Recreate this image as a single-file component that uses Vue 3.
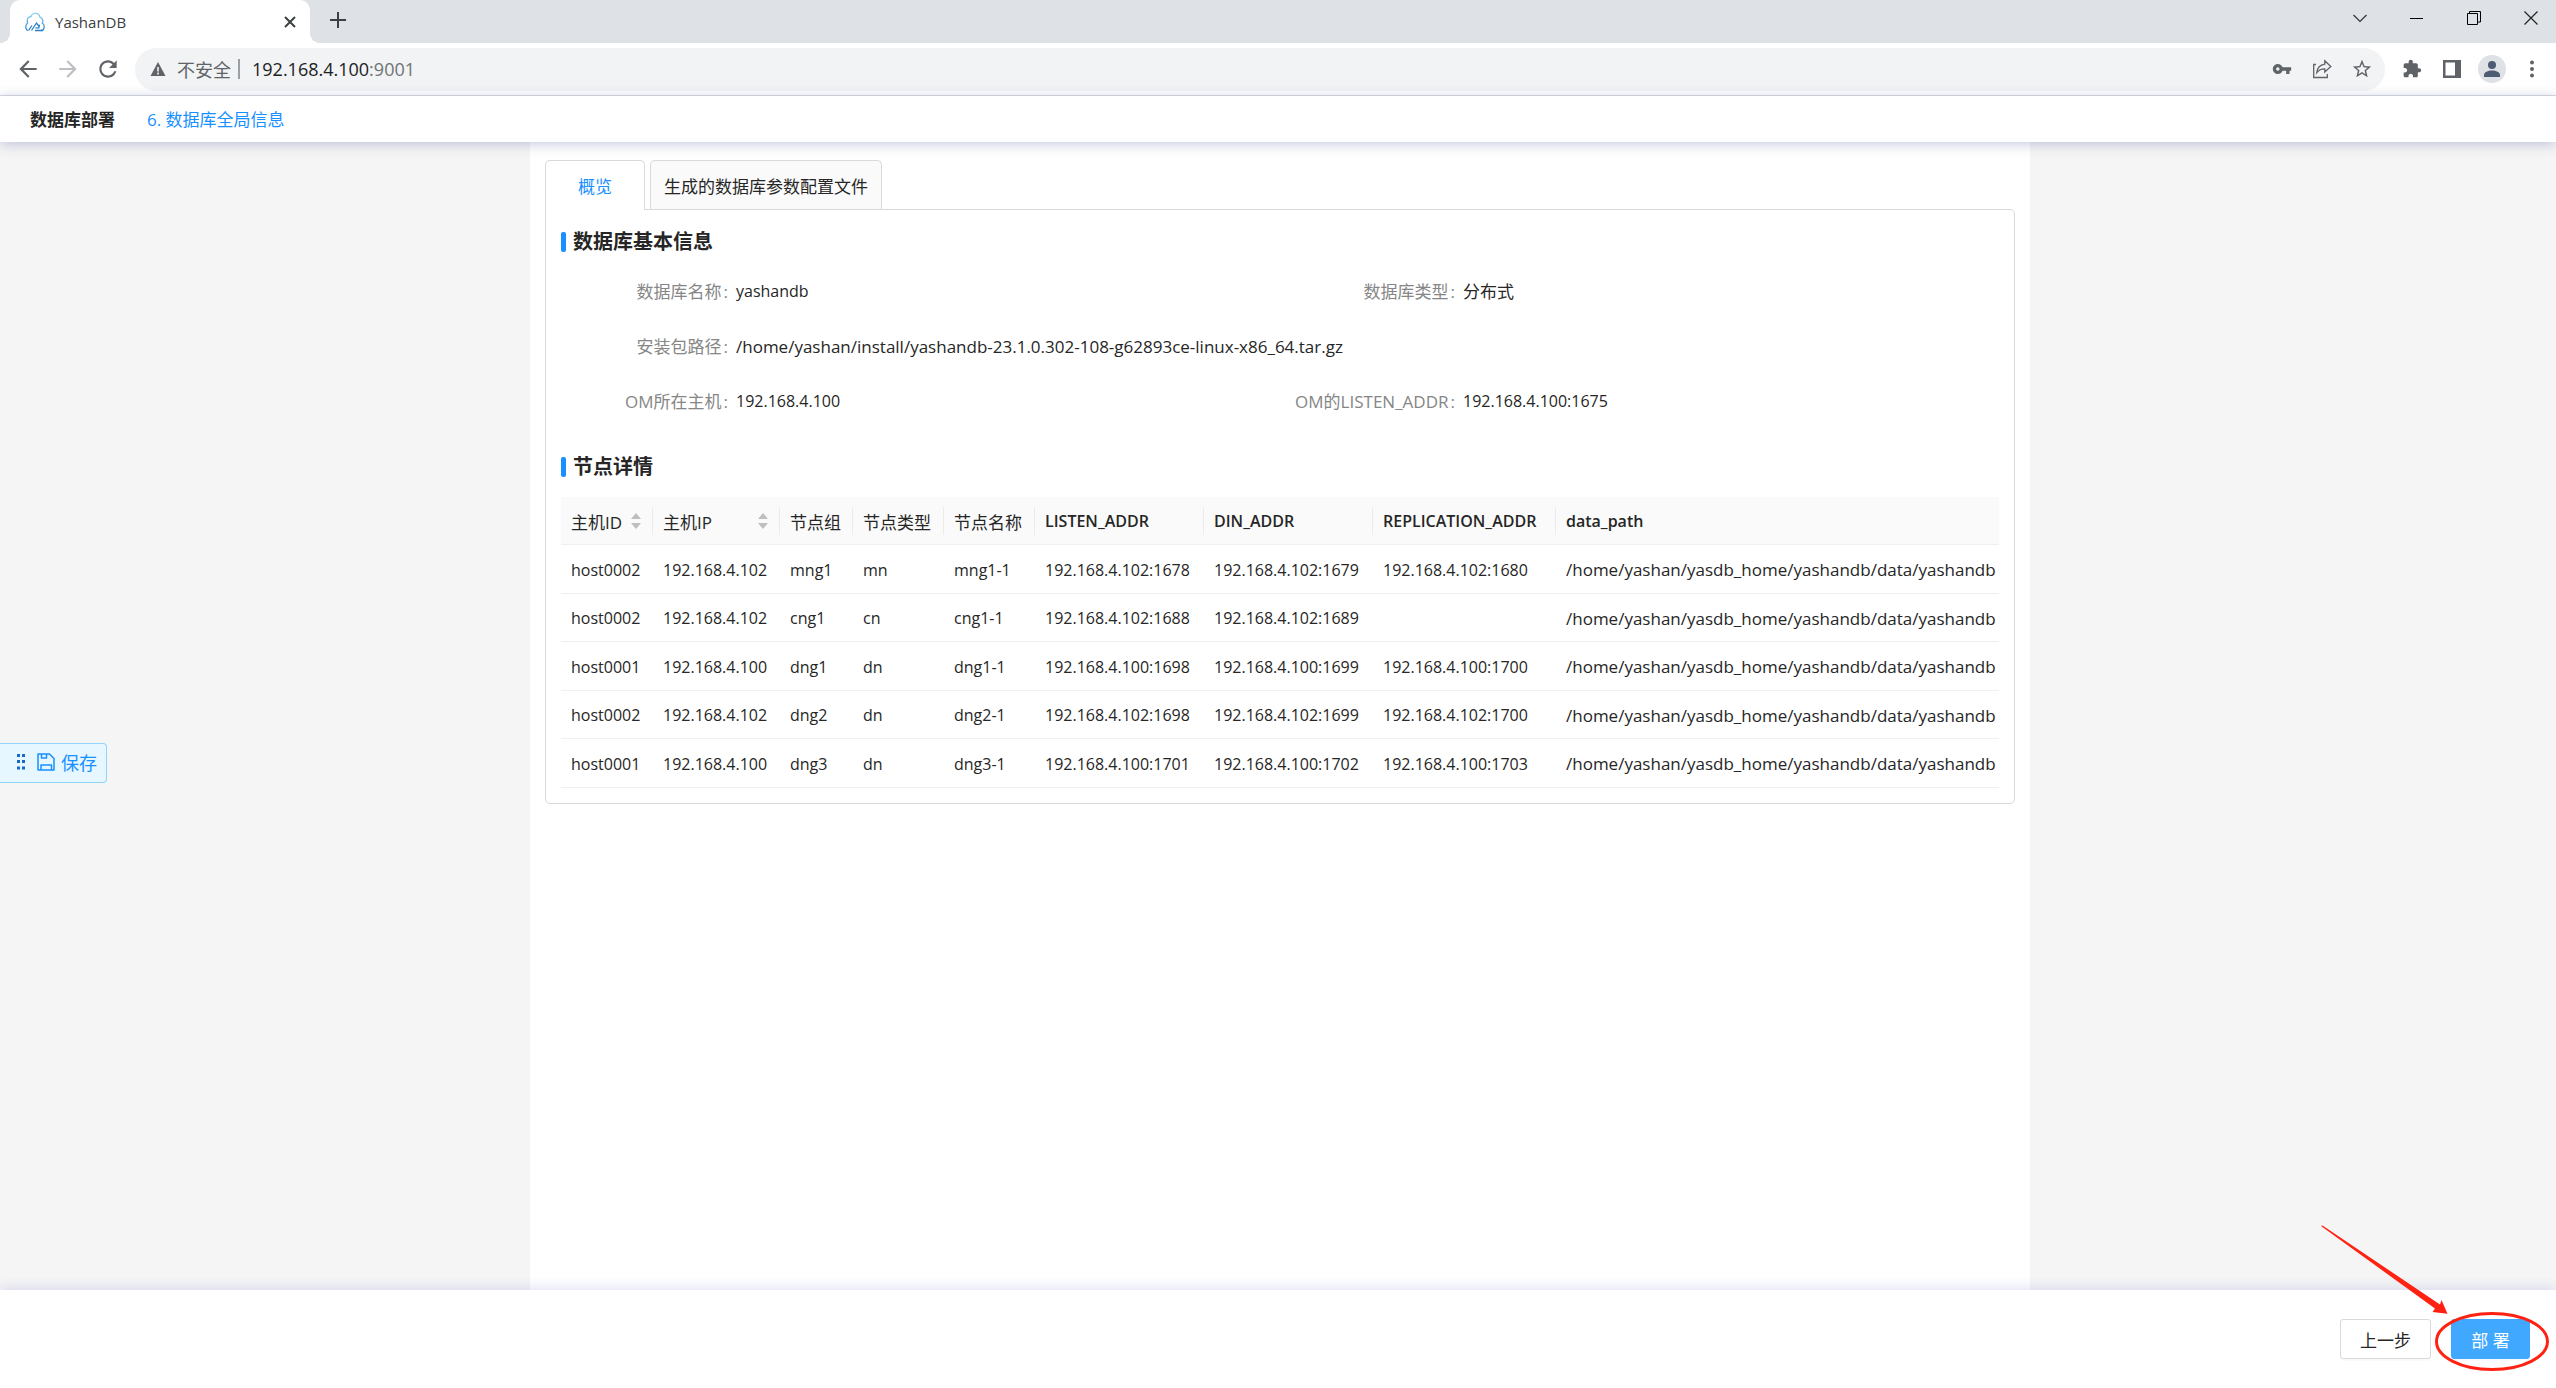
<script setup>
import { ref } from 'vue'

const activeTab = ref('overview')

const columns = [
  { key: 'hostId', title: '主机ID', sortable: true },
  { key: 'hostIp', title: '主机IP', sortable: true },
  { key: 'group', title: '节点组' },
  { key: 'type', title: '节点类型' },
  { key: 'name', title: '节点名称' },
  { key: 'listen', title: 'LISTEN_ADDR', latin: true },
  { key: 'din', title: 'DIN_ADDR', latin: true },
  { key: 'replication', title: 'REPLICATION_ADDR', latin: true },
  { key: 'path', title: 'data_path', latin: true },
]

const dataPath = '/home/yashan/yasdb_home/yashandb/data/yashandb'
const nodes = [
  { hostId: 'host0002', hostIp: '192.168.4.102', group: 'mng1', type: 'mn', name: 'mng1-1', listen: '192.168.4.102:1678', din: '192.168.4.102:1679', replication: '192.168.4.102:1680', path: dataPath },
  { hostId: 'host0002', hostIp: '192.168.4.102', group: 'cng1', type: 'cn', name: 'cng1-1', listen: '192.168.4.102:1688', din: '192.168.4.102:1689', replication: '', path: dataPath },
  { hostId: 'host0001', hostIp: '192.168.4.100', group: 'dng1', type: 'dn', name: 'dng1-1', listen: '192.168.4.100:1698', din: '192.168.4.100:1699', replication: '192.168.4.100:1700', path: dataPath },
  { hostId: 'host0002', hostIp: '192.168.4.102', group: 'dng2', type: 'dn', name: 'dng2-1', listen: '192.168.4.102:1698', din: '192.168.4.102:1699', replication: '192.168.4.102:1700', path: dataPath },
  { hostId: 'host0001', hostIp: '192.168.4.100', group: 'dng3', type: 'dn', name: 'dng3-1', listen: '192.168.4.100:1701', din: '192.168.4.100:1702', replication: '192.168.4.100:1703', path: dataPath },
]
</script>

<template>
  <div class="window">
    <div class="tab-strip">
      <div class="browser-tab">
        <svg class="favicon" width="20" height="20" viewBox="0 0 20 20" fill="none">
          <defs>
            <linearGradient id="cloud" x1="0" y1="0" x2="0" y2="1">
              <stop offset="0" stop-color="#8fd3f2" />
              <stop offset="1" stop-color="#2a86cf" />
            </linearGradient>
          </defs>
          <path d="M2.800 18.500C1 18 .3 15 1.200 13c.5-1.200 1.200-1.700 1.400-2.500C1.500 7.500 3 4.800 6 4.500 7 1.500 10 .4 12.300 1.600c1.700.9 2.500 2.100 2.700 3.600 2.600.9 3.400 3.500 2.300 5.900 1.600 1.200 2.200 3 1.700 4.700-.4 1.700-1.500 2.700-3 2.700" stroke="url(#cloud)" stroke-width="1.300" />
          <path d="M3.500 18.500l3.500-5M6.500 18.500l5-7.500 3 4M10 18.500h8M10.500 15.800h4M13.500 13.500h1.500" stroke="#2a80c8" stroke-width="1.300" />
        </svg>
        <span class="browser-tab-title">YashanDB</span>
        <button class="icon-btn tab-close" aria-label="关闭标签页">
          <svg width="12" height="12" viewBox="0 0 12 12" stroke="#3c4043" stroke-width="2"><path d="M1 1l10 10M11 1L1 11" /></svg>
        </button>
      </div>
      <button class="icon-btn new-tab" aria-label="新标签页">
        <svg width="16" height="16" viewBox="0 0 16 16" stroke="#3c4043" stroke-width="2"><path d="M8 0v16M0 8h16" /></svg>
      </button>
      <div class="window-buttons">
        <button class="icon-btn" aria-label="搜索标签页">
          <svg width="14" height="14" viewBox="0 0 14 14" fill="none" stroke="#333" stroke-width="1.200"><path d="M.5 4L7 10.500 13.500 4" /></svg>
        </button>
        <button class="icon-btn" aria-label="最小化">
          <svg width="14" height="14" viewBox="0 0 14 14" stroke="#000"><path d="M0 7.500h13" /></svg>
        </button>
        <button class="icon-btn" aria-label="还原">
          <svg width="14" height="14" viewBox="0 0 14 14" fill="none" stroke="#000"><path d="M.5 2.500h10v11H.5zM2.500 2.500v-2h11v10.500h-3" /></svg>
        </button>
        <button class="icon-btn" aria-label="关闭">
          <svg width="14" height="14" viewBox="0 0 14 14" stroke="#222" stroke-width="1.200"><path d="M.5 .5l13 13M13.500 .5l-13 13" /></svg>
        </button>
      </div>
    </div>

    <div class="toolbar">
      <button class="icon-btn" aria-label="后退">
        <svg width="26" height="26" viewBox="0 0 24 24" fill="#5f6368"><path d="M20 11H7.830l5.590-5.590L12 4l-8 8 8 8 1.410-1.410L7.830 13H20v-2z" /></svg>
      </button>
      <button class="icon-btn" aria-label="前进">
        <svg width="26" height="26" viewBox="0 0 24 24" fill="#bdbfc2"><path d="M12 4l-1.410 1.410L16.170 11H4v2h12.170l-5.580 5.590L12 20l8-8z" /></svg>
      </button>
      <button class="icon-btn" aria-label="重新加载">
        <svg width="26" height="26" viewBox="0 0 24 24" fill="#5f6368"><path d="M17.650 6.350C16.200 4.900 14.210 4 12 4c-4.420 0-7.990 3.580-7.990 8s3.570 8 7.990 8c3.730 0 6.840-2.550 7.730-6h-2.080c-.82 2.330-3.040 4-5.650 4-3.310 0-6-2.690-6-6s2.690-6 6-6c1.660 0 3.140.69 4.220 1.780L13 11h7V4l-2.350 2.350z" /></svg>
      </button>
      <div class="omnibox">
        <svg class="warn" width="16" height="16" viewBox="0 0 16 16"><path d="M8 1l7.500 14H.5z" fill="#5f6368" /><path d="M8 6v4.500M8 11.500v2" stroke="#f1f3f4" stroke-width="1.600" /></svg>
        <span class="insecure">不安全</span>
        <span class="divider"></span>
        <span class="url">192.168.4.100<span class="port">:9001</span></span>
        <button class="icon-btn" aria-label="密码">
          <svg width="20" height="20" viewBox="0 0 24 24" fill="#5f6368"><path d="M12.650 10C11.830 7.670 9.610 6 7 6c-3.310 0-6 2.690-6 6s2.690 6 6 6c2.610 0 4.830-1.670 5.650-4H17v4h4v-4h2v-4H12.650zM7 14c-1.100 0-2-.9-2-2s.9-2 2-2 2 .9 2 2-.9 2-2 2z" /></svg>
        </button>
        <button class="icon-btn" aria-label="分享">
          <svg width="20" height="20" viewBox="0 0 20 20" fill="none" stroke="#5f6368" stroke-width="1.300"><path d="M4 5.500H1.700v13h13.600V15M12.800 1.800l6 5.700-6 5.500V9.800c-3.500 0-6 1-8 3.700.5-4.500 3-7.500 8-8.300z" /></svg>
        </button>
        <button class="icon-btn" aria-label="收藏">
          <svg width="22" height="22" viewBox="0 0 24 24" fill="#5f6368"><path d="M22 9.240l-7.190-.62L12 2 9.190 8.630 2 9.240l5.460 4.730L5.820 21 12 17.270 18.180 21l-1.630-7.030L22 9.240zM12 15.400l-3.760 2.270 1-4.280-3.320-2.880 4.380-.38L12 6.100l1.710 4.040 4.380.38-3.320 2.880 1 4.280L12 15.400z" /></svg>
        </button>
      </div>
      <button class="icon-btn" aria-label="扩展程序">
        <svg width="20" height="20" viewBox="0 0 24 24" fill="#5f6368"><path d="M20.500 11H19V7c0-1.100-.9-2-2-2h-4V3.500C13 2.120 11.880 1 10.500 1S8 2.120 8 3.500V5H4c-1.100 0-1.990.9-1.990 2v3.800H3.500c1.490 0 2.700 1.210 2.700 2.700s-1.210 2.700-2.700 2.700H2V20c0 1.100.9 2 2 2h3.800v-1.500c0-1.490 1.210-2.700 2.700-2.700 1.490 0 2.700 1.210 2.700 2.700V22H17c1.100 0 2-.9 2-2v-4h1.500c1.380 0 2.500-1.120 2.500-2.500S21.880 11 20.500 11z" /></svg>
      </button>
      <button class="icon-btn" aria-label="侧边栏">
        <svg width="18" height="18" viewBox="0 0 18 18"><path d="M0 0h18v18H0zM2.500 2.500v13H12v-13z" fill="#5f6368" fill-rule="evenodd" /></svg>
      </button>
      <button class="icon-btn" aria-label="用户">
        <svg width="28" height="28" viewBox="0 0 28 28"><circle cx="14" cy="14" r="14" fill="#dee1e6" /><circle cx="14" cy="10" r="4" fill="#4d5b73" /><path d="M6 22v-2c0-3 4-4.500 8-4.500s8 1.500 8 4.500v2z" fill="#4d5b73" /></svg>
      </button>
      <button class="icon-btn" aria-label="更多">
        <svg width="4" height="18" viewBox="0 0 4 18" fill="#5f6368"><circle cx="2" cy="2.500" r="2" /><circle cx="2" cy="9" r="2" /><circle cx="2" cy="15.500" r="2" /></svg>
      </button>
    </div>

    <header class="page-header">
      <h1>数据库部署</h1>
      <a href="#step-6">6. 数据库全局信息</a>
    </header>

    <main class="page">
      <div class="content">
        <div class="tabs" role="tablist">
          <button role="tab" class="tab tab-short" :class="{ active: activeTab === 'overview' }" :aria-selected="activeTab === 'overview'" @click="activeTab = 'overview'">概览</button>
          <button role="tab" class="tab" :class="{ active: activeTab === 'config' }" :aria-selected="activeTab === 'config'" @click="activeTab = 'config'">生成的数据库参数配置文件</button>
        </div>

        <section class="panel">
          <h2>数据库基本信息</h2>
          <dl class="info">
            <dt>数据库名称</dt>
            <dd>yashandb</dd>
            <dt>数据库类型</dt>
            <dd class="cjk">分布式</dd>
            <dt>安装包路径</dt>
            <dd class="wide path">/home/yashan/install/yashandb-23.1.0.302-108-g62893ce-linux-x86_64.tar.gz</dd>
            <dt>OM所在主机</dt>
            <dd>192.168.4.100</dd>
            <dt>OM的LISTEN_ADDR</dt>
            <dd>192.168.4.100:1675</dd>
          </dl>

          <h2>节点详情</h2>
          <table>
            <colgroup>
              <col v-for="col in columns" :key="col.key" :class="'col-' + col.key" />
            </colgroup>
            <thead>
              <tr>
                <th v-for="col in columns" :key="col.key" scope="col" :class="{ latin: col.latin }">
                  <span class="th-inner">
                    {{ col.title }}
                    <svg v-if="col.sortable" width="10" height="16" viewBox="0 0 10 16" fill="#bfbfbf"><path d="M5 0l5 6H0zM5 16l5-6H0z" /></svg>
                  </span>
                </th>
              </tr>
            </thead>
            <tbody>
              <tr v-for="node in nodes" :key="node.listen">
                <td v-for="col in columns" :key="col.key" :class="{ path: col.key === 'path' }">{{ node[col.key] }}</td>
              </tr>
            </tbody>
          </table>
        </section>
      </div>
    </main>

    <button class="save">
      <svg width="8" height="16" viewBox="0 0 8 16" fill="#1668c9"><path d="M0 0h3v3H0zM5 0h3v3H5zM0 6h3v3H0zM5 6h3v3H5zM0 12.500h3v3H0zM5 12.500h3v3H5z" /></svg>
      <svg width="18" height="18" viewBox="0 0 18 18" fill="none" stroke="#1890ff" stroke-width="1.500"><path d="M1 1h11.500L17 5.500V17H1zM4.500 1v4h5V1M4 17v-5h10.500v5" stroke-linejoin="round" /></svg>
      <span>保存</span>
    </button>

    <footer class="footer">
      <button class="btn">上一步</button>
      <button class="btn primary">部 署</button>
      <svg class="callout" width="256" height="188" viewBox="0 0 256 188">
        <path d="M21 26L22.500 25.500L140 104.500L141.500 100L147.500 113.800L132.500 112L135 108.500Z" fill="#ff2212" />
        <ellipse cx="192" cy="141.500" rx="55.500" ry="28" fill="none" stroke="#ff2212" stroke-width="3" />
      </svg>
    </footer>
  </div>
</template>

<style>
body {
  margin: 0;
}
</style>

<style scoped>
.window {
  position: relative;
  display: flex;
  flex-direction: column;
  min-height: 100vh;
  background: #f5f5f5;
  color: #262626;
  font-family: "Open Sans", "Noto Sans CJK SC", sans-serif;
  font-size: 16px;
}

button {
  font-family: inherit;
  cursor: pointer;
}

svg {
  display: block;
  flex: none;
}

.icon-btn {
  display: flex;
  flex: none;
  align-items: center;
  justify-content: center;
  width: 40px;
  height: 40px;
  padding: 0;
  border: 0;
  background: none;
}

/* browser frame */
.tab-strip {
  display: flex;
  height: 43px;
  padding-left: 10px;
  background: #dee1e6;
}

.browser-tab {
  position: relative;
  display: flex;
  align-items: center;
  width: 300px;
  box-sizing: border-box;
  padding-left: 15px;
  border-radius: 10px 10px 0 0;
  background: #fff;
}

.browser-tab::before,
.browser-tab::after {
  content: "";
  position: absolute;
  bottom: 0;
  width: 10px;
  height: 10px;
}

.browser-tab::before {
  right: 100%;
  background: radial-gradient(circle at 0 0, #dee1e6 10px, #fff 10px);
}

.browser-tab::after {
  left: 100%;
  background: radial-gradient(circle at 100% 0, #dee1e6 10px, #fff 10px);
}

.browser-tab-title {
  flex: 1;
  margin-left: 10px;
  color: #3c4043;
  font-size: 15px;
}

.new-tab {
  margin-left: 8px;
}

.window-buttons {
  display: flex;
  gap: 7px;
  margin-left: auto;
}

.window-buttons .icon-btn {
  width: 50px;
  height: 36px;
}

.toolbar {
  display: flex;
  align-items: center;
  height: 52px;
  padding: 0 4px 0 8px;
  border-bottom: 1px solid #dadce0;
  background: #fff;
}

.omnibox {
  display: flex;
  flex: 1;
  align-items: center;
  height: 43px;
  margin: 0 7px;
  padding: 0 3px 0 15px;
  border-radius: 22px;
  background: #f1f3f4;
  font-size: 18px;
}

.insecure {
  margin-left: 11px;
  color: #5f6368;
}

.divider {
  width: 2px;
  height: 20px;
  margin: 0 12px 0 7px;
  background: #9aa0a6;
}

.url {
  flex: 1;
  color: #202124;
}

.port {
  color: #6f7377;
}

/* page */
.page-header {
  position: relative;
  z-index: 1;
  display: flex;
  align-items: center;
  gap: 32px;
  height: 46px;
  box-sizing: border-box;
  padding: 0 0 2px 30px;
  background: #fff;
  box-shadow: 0 2px 12px rgba(60, 70, 150, 0.3);
}

.page-header h1 {
  margin: 0;
  font-size: 17px;
  font-weight: 700;
}

.page-header a {
  color: #1890ff;
  font-size: 17px;
  text-decoration: none;
}

.page {
  display: flex;
  flex: 1;
  justify-content: center;
  padding-left: 4px;
}

.content {
  width: 100%;
  max-width: 1500px;
  box-sizing: border-box;
  padding: 18px 15px 15px;
  background: #fff;
}

.tabs {
  display: flex;
  align-items: flex-end;
  gap: 5px;
}

.tab {
  height: 49px;
  padding: 0 13px;
  border: 1px solid #d9d9d9;
  border-bottom: 0;
  border-radius: 5px 5px 0 0;
  background: #fafafa;
  color: #262626;
  font-size: 17px;
}

.tab-short {
  min-width: 100px;
}

.tab.active {
  height: 50px;
  margin-bottom: -1px;
  background: #fff;
  color: #1890ff;
}

.panel {
  padding: 15px;
  border: 1px solid #d9d9d9;
  border-radius: 0 5px 5px 5px;
}

h2 {
  display: flex;
  align-items: center;
  gap: 7px;
  margin: 0;
  font-size: 20px;
  font-weight: 700;
  line-height: 34px;
}

h2::before {
  content: "";
  width: 5px;
  height: 20px;
  border-radius: 2px;
  background: #1890ff;
}

.info {
  display: grid;
  grid-template-columns: 175fr 527fr 200fr 536fr;
  margin: 5px 0 21px;
  line-height: 55px;
}

dt {
  color: #868686;
  text-align: right;
  white-space: nowrap;
  font-size: 17px;
}

dt::after {
  content: ":";
  margin: 0 8px 0 2px;
}

dd {
  margin: 0;
}

dd.wide {
  grid-column: span 3;
}

.cjk,
.path {
  font-size: 17px;
}

table {
  width: 100%;
  margin-top: 13px;
  border-collapse: separate;
  border-spacing: 0;
  table-layout: fixed;
}

.col-hostId { width: 92px; }
.col-hostIp { width: 127px; }
.col-group { width: 73px; }
.col-type,
.col-name { width: 91px; }
.col-listen,
.col-din { width: 169px; }
.col-replication { width: 183px; }

th,
td {
  box-sizing: border-box;
  padding: 1px 0 0 10px;
  border-bottom: 1px solid #f0f0f0;
  text-align: left;
  white-space: nowrap;
}

th {
  height: 48px;
  background: #fafafa;
  font-size: 17px;
  font-weight: 400;
}

th.latin {
  font-size: 16px;
  font-weight: 600;
}

.th-inner {
  display: flex;
  align-items: center;
  justify-content: space-between;
  height: 28px;
  padding-right: 11px;
  border-right: 1px solid #ebebeb;
}

th:last-child .th-inner {
  border-right: 0;
}

td {
  height: 48px;
}

tbody tr:nth-child(odd) td {
  height: 49px;
}

/* floating save handle on the left edge */
.save {
  position: fixed;
  top: 743px;
  left: 0;
  display: flex;
  align-items: center;
  height: 40px;
  padding: 0 9px 2px 17px;
  border: 1px solid #91d5ff;
  border-left: 0;
  border-radius: 0 4px 4px 0;
  background: #e6f7ff;
  color: #1890ff;
  font-size: 18px;
}

.save svg + svg {
  margin: 0 6px 0 12px;
}

.footer {
  position: relative;
  display: flex;
  align-items: center;
  justify-content: flex-end;
  gap: 20px;
  height: 98px;
  padding: 0 26px 0 0;
  box-sizing: border-box;
  background: #fff;
  box-shadow: 0 -2px 12px rgba(60, 70, 200, 0.16);
}

.btn {
  height: 40px;
  min-width: 79px;
  padding: 0 19px;
  border: 1px solid #d9d9d9;
  border-radius: 3px;
  background: #fff;
  color: #262626;
  font-size: 17px;
  box-shadow: 0 2px 0 rgba(0, 0, 0, 0.02);
}

.btn.primary {
  border-color: #40a9ff;
  background: #40a9ff;
  color: #fff;
}

/* hand-drawn arrow and ring around the deploy button */
.callout {
  position: absolute;
  right: 0;
  bottom: 0;
  pointer-events: none;
}
</style>
